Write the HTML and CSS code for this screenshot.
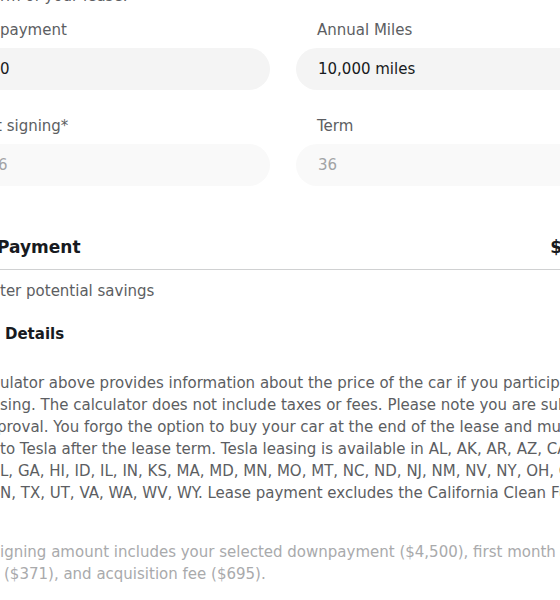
FILE: index.html
```html
<!DOCTYPE html>
<html lang="en">
<head>
<meta charset="utf-8">
<title>Lease Calculator</title>
<link rel="stylesheet" href="styles.css">
</head>
<body>
<main class="page">
  <p class="intro">rm of your lease.</p>

  <section class="fields">
    <div class="field">
      <label class="field-label">payment</label>
      <div class="input">0</div>
    </div>
    <div class="field field-right">
      <label class="field-label">Annual Miles</label>
      <div class="input">10,000 miles</div>
    </div>
    <div class="field">
      <label class="field-label label-cut">t signing*</label>
      <div class="input input-disabled value-cut">6</div>
    </div>
    <div class="field field-right">
      <label class="field-label">Term</label>
      <div class="input input-disabled">36</div>
    </div>
  </section>

  <section class="summary">
    <div class="summary-row">
      <h2 class="summary-title">Payment</h2>
      <span class="summary-value">$</span>
    </div>
    <p class="savings">ter potential savings</p>
  </section>

  <h3 class="details-title">Details</h3>

  <p class="disclaimer">
    <span class="line">ulator above provides information about the price of the car if you participate</span>
    <span class="line">sing. The calculator does not include taxes or fees. Please note you are subject</span>
    <span class="line line-cut">proval. You forgo the option to buy your car at the end of the lease and must</span>
    <span class="line">to Tesla after the lease term. Tesla leasing is available in AL, AK, AR, AZ, CA,</span>
    <span class="line">L, GA, HI, ID, IL, IN, KS, MA, MD, MN, MO, MT, NC, ND, NJ, NM, NV, NY, OH, OK,</span>
    <span class="line">N, TX, UT, VA, WA, WV, WY. Lease payment excludes the California Clean Fuel</span>
  </p>

  <p class="footnote">
    <span class="line">igning amount includes your selected downpayment ($4,500), first month</span>
    <span class="line line-indent">($371), and acquisition fee ($695).</span>
  </p>
</main>
</body>
</html>
```

FILE: styles.css
```css
html, body {
  margin: 0;
  padding: 0;
  background: #ffffff;
}

body {
  font-family: "DejaVu Sans", "Liberation Sans", sans-serif;
  font-size: 15px;
  line-height: 22px;
  color: #5c5e62;
  width: 560px;
  height: 600px;
  overflow: hidden;
}

.page {
  width: 560px;
  overflow: hidden;
}

.intro {
  margin: -15px 0 0 0;
  color: #5c5e62;
  white-space: nowrap;
}

.fields {
  display: grid;
  grid-template-columns: 270px 300px;
  column-gap: 26px;
  row-gap: 25px;
  margin-top: 12px;
}

.field {
  display: flex;
  flex-direction: column;
  gap: 7px;
}

.field-label {
  display: block;
  color: #5c5e62;
  line-height: 22px;
}

.field-right .field-label {
  padding-left: 21px;
}

.label-cut {
  text-indent: -4px;
}

.input {
  height: 42px;
  border-radius: 21px;
  background: #f4f4f4;
  color: #171a20;
  font-weight: 500;
  display: flex;
  align-items: center;
  white-space: nowrap;
}

.field-right .input {
  padding-left: 22px;
  border-radius: 21px 0 0 21px;
}

.field:not(.field-right) .input {
  border-radius: 0 21px 21px 0;
}

.input-disabled {
  background: #f9f9f9;
  color: #a2a3a5;
  font-weight: 400;
}

.value-cut {
  text-indent: -2px;
}

.summary {
  margin-top: 49px;
}

.summary-row {
  display: flex;
  justify-content: space-between;
  align-items: center;
  padding-bottom: 10px;
  border-bottom: 1px solid #d0d1d2;
  white-space: nowrap;
}

.summary-title {
  margin: 0;
  font-size: 17px;
  line-height: 24px;
  font-weight: 600;
  color: #171a20;
  text-indent: -3px;
}

.summary-value {
  font-size: 17px;
  line-height: 24px;
  font-weight: 600;
  color: #171a20;
  margin-right: -2px;
}

.savings {
  margin: 10px 0 0 0;
  color: #5c5e62;
}

.details-title {
  margin: 21px 0 0 0;
  padding-left: 5px;
  font-size: 15px;
  line-height: 22px;
  font-weight: 600;
  color: #171a20;
}

.disclaimer {
  margin: 27px 0 0 0;
  color: #5c5e62;
}

.line {
  display: block;
  white-space: nowrap;
}

.line-cut {
  text-indent: -3px;
}

.footnote {
  margin: 37px 0 0 0;
  color: #a9aaac;
}

.line-indent {
  padding-left: 4px;
}
```
